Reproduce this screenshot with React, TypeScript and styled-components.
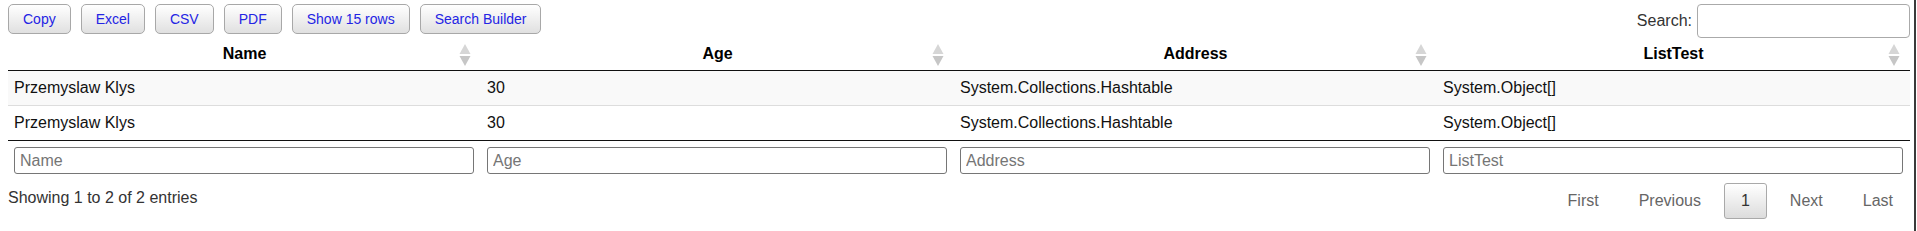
import React from 'react'
import styled, { createGlobalStyle } from 'styled-components'

const GlobalStyle = createGlobalStyle`
  html, body {
    margin: 0;
    padding: 0;
    background: #fff;
  }
  body {
    font-family: "Liberation Sans", Arial, sans-serif;
    font-size: 16px;
    color: #000;
  }
`

const Page = styled.div`
  box-sizing: border-box;
  width: 1916px;
  height: 231px;
  padding: 4px 4px 0 8px;
  border-right: 2px solid #3a3a3a;
  display: flex;
  flex-direction: column;
`

const TopBar = styled.div`
  display: flex;
  justify-content: space-between;
  align-items: flex-start;
  height: 35px;
`

const ButtonGroup = styled.div`
  display: flex;
  gap: 10px;
`

const ToolButton = styled.button`
  box-sizing: border-box;
  height: 30px;
  padding: 0 14px;
  font-family: inherit;
  font-size: 14px;
  line-height: 16px;
  color: #2424e4;
  background: linear-gradient(to bottom, #ffffff 0%, #e0e0e0 100%);
  border: 1px solid #a8a8a8;
  border-radius: 5px;
  cursor: pointer;
`

const SearchBox = styled.label`
  display: flex;
  align-items: center;
  gap: 5px;
  font-size: 16px;
  color: #333;
`

const SearchInput = styled.input`
  box-sizing: border-box;
  width: 213px;
  height: 34px;
  border: 1px solid #aaa;
  border-radius: 4px;
  padding: 4px;
  font-family: inherit;
  font-size: 16px;
`

const Table = styled.table`
  width: 1902px;
  table-layout: fixed;
  border-collapse: collapse;
  border-spacing: 0;
`

const HeadCell = styled.th`
  position: relative;
  padding: 6px 10px 7px;
  line-height: 18px;
  font-size: 16px;
  font-weight: bold;
  text-align: center;
  border-bottom: 1px solid #111;
`

const SortIcon = styled.svg`
  position: absolute;
  right: 10px;
  top: 50%;
  margin-top: -12px;
`

const Row = styled.tr<{ $striped: boolean }>`
  background: ${p => (p.$striped ? '#f9f9f9' : '#fff')};
  border-top: ${p => (p.$striped ? 'none' : '1px solid #ddd')};
`

const Cell = styled.td`
  padding: 8px 6px;
  line-height: 18px;
  font-size: 16px;
  color: #111;
  white-space: nowrap;
`

const FootRow = styled.tr`
  border-top: 1px solid #111;
`

const FootCell = styled.th`
  padding: 6px 6px 6px;
  font-weight: normal;
  text-align: left;
`

const FilterInput = styled.input`
  box-sizing: border-box;
  width: calc(100% - 1px);
  height: 27px;
  padding: 3px 5px;
  border: 1px solid #767676;
  border-radius: 3px;
  font-family: inherit;
  font-size: 16px;
  line-height: 18px;

  &::placeholder {
    color: #757575;
  }
`

const BottomBar = styled.div`
  display: flex;
  justify-content: space-between;
  align-items: flex-start;
  margin-top: 3px;
`

const Info = styled.div`
  padding-top: 6px;
  line-height: 18px;
  font-size: 16px;
  color: #333;
`

const Pager = styled.div`
  display: flex;
  gap: 6px;
`

const PageButton = styled.span<{ $current?: boolean }>`
  box-sizing: border-box;
  display: inline-block;
  height: 36px;
  padding: 8px 16px;
  line-height: 18px;
  font-size: 16px;
  color: ${p => (p.$current ? '#333' : '#666')};
  border: 1px solid ${p => (p.$current ? '#a9a9a9' : 'transparent')};
  border-radius: 3px;
  background: ${p => (p.$current ? 'linear-gradient(to bottom, #ffffff 0%, #dcdcdc 100%)' : 'transparent')};
`

const columns = [
  { title: 'Name', width: 473 },
  { title: 'Age', width: 473 },
  { title: 'Address', width: 483 },
  { title: 'ListTest', width: 473 },
]

const rows = [
  ['Przemyslaw Klys', '30', 'System.Collections.Hashtable', 'System.Object[]'],
  ['Przemyslaw Klys', '30', 'System.Collections.Hashtable', 'System.Object[]'],
]

function SortBoth() {
  return (
    <SortIcon width="12" height="24" viewBox="0 0 12 24">
      <polygon points="6,1 11.5,11 0.5,11" fill="#d6d6d6" />
      <polygon points="0.5,13 11.5,13 6,23" fill="#c6c6c6" />
    </SortIcon>
  )
}

export default function App() {
  return (
    <>
      <GlobalStyle />
      <Page>
        <TopBar>
          <ButtonGroup>
            {['Copy', 'Excel', 'CSV', 'PDF', 'Show 15 rows', 'Search Builder'].map(label => (
              <ToolButton key={label}>{label}</ToolButton>
            ))}
          </ButtonGroup>
          <SearchBox>
            Search:
            <SearchInput type="search" />
          </SearchBox>
        </TopBar>

        <Table>
          <colgroup>
            {columns.map(c => (
              <col key={c.title} style={{ width: c.width }} />
            ))}
          </colgroup>
          <thead>
            <tr>
              {columns.map(c => (
                <HeadCell key={c.title}>
                  {c.title}
                  <SortBoth />
                </HeadCell>
              ))}
            </tr>
          </thead>
          <tbody>
            {rows.map((r, i) => (
              <Row key={i} $striped={i % 2 === 0}>
                {r.map((v, j) => (
                  <Cell key={j}>{v}</Cell>
                ))}
              </Row>
            ))}
          </tbody>
          <tfoot>
            <FootRow>
              {columns.map(c => (
                <FootCell key={c.title}>
                  <FilterInput placeholder={c.title} />
                </FootCell>
              ))}
            </FootRow>
          </tfoot>
        </Table>

        <BottomBar>
          <Info>Showing 1 to 2 of 2 entries</Info>
          <Pager>
            <PageButton>First</PageButton>
            <PageButton>Previous</PageButton>
            <PageButton $current>1</PageButton>
            <PageButton>Next</PageButton>
            <PageButton>Last</PageButton>
          </Pager>
        </BottomBar>
      </Page>
    </>
  )
}
